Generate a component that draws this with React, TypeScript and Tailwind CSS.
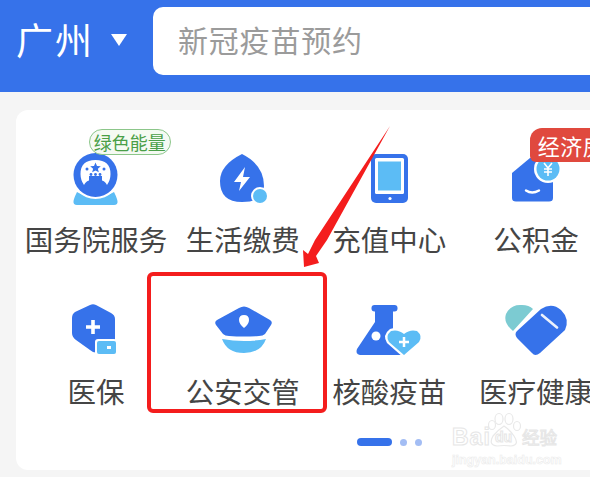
const BLUE = "#3672ea";
const LIGHT = "#5cbcf5";

function Icon({ x, y, children }: { x: number; y: number; children: React.ReactNode }) {
  return (
    <svg width="60" height="60" viewBox={`${x} ${y} 60 60`} className="block overflow-visible">
      {children}
    </svg>
  );
}

function Gov() {
  return (
    <Icon x={66} y={150}>
      <path d="M77 192 Q95.7 203 114 192 Q117 198 117.500 201 Q118 205 114 205 L77 205 Q73 205 73.500 201 Q74 198 77 192Z" fill={LIGHT} />
      <circle cx="95.5" cy="175" r="24" fill="#fff" />
      <circle cx="95.5" cy="175" r="22" fill={BLUE} />
      <path d="M84 185 Q80.500 180 80.500 174 Q80.500 160 95.500 160 Q110.500 160 110.500 174 Q110.500 180 107 185 Q105 181 102 180.500 L102 176 L89 176 L89 180.500 Q86 181 84 185Z" fill="#fff" />
      <path d="M95.500 162.500 L97 166 L100.800 166.300 L97.900 168.700 L98.800 172.300 L95.500 170.400 L92.200 172.300 L93.100 168.700 L90.200 166.300 L94 166Z" fill={BLUE} />
      <circle cx="87" cy="169" r="1.500" fill={BLUE} />
      <circle cx="104" cy="169" r="1.500" fill={BLUE} />
      <circle cx="91" cy="174.500" r="1.400" fill={BLUE} />
      <circle cx="95.500" cy="174.500" r="1.400" fill={BLUE} />
      <circle cx="100" cy="174.500" r="1.400" fill={BLUE} />
    </Icon>
  );
}

function Drop() {
  return (
    <Icon x={212} y={150}>
      <path d="M241 154 Q263 165 263 186 Q263 202 241 202 Q219 202 219 181 Q219 165 241 154Z" fill={BLUE} />
      <path d="M244 167 L233 182 L240 182 L238 191 L249 177 L242 177Z" fill="#fff" />
      <circle cx="259" cy="196" r="9" fill="#fff" />
      <circle cx="259" cy="196" r="7" fill={LIGHT} />
    </Icon>
  );
}

function Tablet() {
  return (
    <Icon x={359} y={150}>
      <rect x="371" y="154" width="37" height="49" rx="5" fill={BLUE} />
      <rect x="375" y="158" width="29" height="36" rx="1.500" fill="#fff" />
      <rect x="378" y="161.500" width="23" height="29" fill={LIGHT} />
      <circle cx="390" cy="198.500" r="1.600" fill="#fff" />
    </Icon>
  );
}

function Fund() {
  return (
    <Icon x={506} y={150}>
      <path d="M512 173 L530 158 L550 158 Q553 158 553 162 L553 198 Q553 201.500 549 201.500 L516 201.500 Q512 201.500 512 198Z" fill={BLUE} />
      <circle cx="548" cy="169" r="14" fill="#fff" />
      <circle cx="548" cy="169" r="11.500" fill={LIGHT} />
      <path d="M544 163 L548 168 L552 163 M548 168 L548 176 M544 169 L552 169 M544 172 L552 172" stroke="#fff" strokeWidth="1.600" fill="none" />
      <path d="M526 190.500 Q532 194.500 539 190.500" stroke="#fff" strokeWidth="2.400" fill="none" strokeLinecap="round" />
    </Icon>
  );
}

function Medical() {
  return (
    <Icon x={66} y={302}>
      <path d="M90 305 Q93 303.500 96 305 L111 313 Q115 315 115 319 L115 340 L101 352 Q94 354 90 350 L76 340 Q72 337 72 333 L72 318 Q72 314 75 312Z" fill={BLUE} />
      <path d="M93 320 L93 334 M86 327 L100 327" stroke="#fff" strokeWidth="3.600" fill="none" />
      <rect x="95" y="339" width="22" height="16.500" rx="3" fill="#fff" />
      <rect x="97" y="341" width="19" height="13" rx="2" fill={LIGHT} />
      <rect x="107" y="346" width="4" height="3" fill="#fff" />
    </Icon>
  );
}

function Police() {
  return (
    <Icon x={212} y={302}>
      <path d="M238 308 Q243 305 248 308 L269 320 Q272 322 270 325 L264 334 Q262 336 258 336 Q243 337 228 336 Q224 336 222 334 L215 325 Q213 322 216 320Z" fill={BLUE} />
      <path d="M243 315 Q248 315 248 320 Q248 324 243 328 Q238 324 238 320 Q238 315 243 315Z" fill="#fff" />
      <path d="M221 339 Q243 343 265 339 Q260 353 243 353 Q226 353 221 339Z" fill={LIGHT} />
    </Icon>
  );
}

function Flask() {
  return (
    <Icon x={359} y={302}>
      <rect x="371.500" y="305" width="26" height="6.500" rx="3" fill={BLUE} />
      <path d="M375 310 L393 310 L393 331 L404 355 L360 355 Q355 354 357 349 L375 322Z" fill={BLUE} />
      <circle cx="376" cy="336" r="4.500" fill="#fff" />
      <path d="M404 358 L387 343 Q382 335 390 329 Q398 326 404 331 Q410 326 418 329 Q425 335 420 343Z" fill="#fff" />
      <path d="M404 355 L389 342 Q385 336 391 331 Q398 329 404 334 Q410 329 417 331 Q423 336 419 342Z" fill={LIGHT} />
      <path d="M404 337 L404 347 M399 342 L409 342" stroke="#fff" strokeWidth="2.500" />
    </Icon>
  );
}

function Heart() {
  return (
    <Icon x={506} y={302}>
      <path d="M513 331 Q503 323 506 314 Q511 304 522 305 Q529 305 533 309Z" fill="#7ccbd2" />
      <path d="M517 331 L541 309 Q552 302 561 310 Q570 319 565 330 L540 353 Q535 357 532 353 L517 338 Q514 334 517 331Z" fill={BLUE} />
      <path d="M542 315 L557 327.500" stroke="#fff" strokeWidth="2.600" strokeLinecap="round" opacity="0.9" />
    </Icon>
  );
}

const items: { label: string; icon: React.ReactNode }[] = [
  { label: "国务院服务", icon: <Gov /> },
  { label: "生活缴费", icon: <Drop /> },
  { label: "充值中心", icon: <Tablet /> },
  { label: "公积金", icon: <Fund /> },
  { label: "医保", icon: <Medical /> },
  { label: "公安交管", icon: <Police /> },
  { label: "核酸疫苗", icon: <Flask /> },
  { label: "医疗健康", icon: <Heart /> },
];

export default function App() {
  return (
    <div className="relative w-[590px] h-[477px] overflow-hidden bg-[#f5f5f5] font-['Noto_Sans_CJK_SC','Noto_Sans',sans-serif]">
      <header className="flex items-start h-[92px] bg-[#3672ea] pt-[7px]">
        <div className="flex items-center h-[68px] w-[153px] pl-[16px] shrink-0 pb-[4px]">
          <span className="text-[37px] leading-none tracking-[2px] text-white whitespace-nowrap">广州</span>
          <span className="ml-[17px] mt-[2px] w-0 h-0 border-x-[8px] border-x-transparent border-t-[12px] border-t-white" />
        </div>
        <div className="flex items-center h-[68px] flex-1 rounded-l-[10px] bg-white pl-[25px] pb-[4px]">
          <span className="text-[30px] leading-none tracking-[0.8px] text-[#9b9b9b] whitespace-nowrap">新冠疫苗预约</span>
        </div>
      </header>

      <main className="ml-4 mt-[18px] h-[360px] w-[590px] rounded-l-xl bg-white pl-[6.67px] pt-10 overflow-hidden">
        <div className="grid grid-cols-[repeat(4,146.67px)] gap-y-[42px]">
          {items.map((it) => (
            <div key={it.label} className="relative flex flex-col items-center">
              {it.icon}
              <span className="mt-[9px] mb-[1px] text-[28.500px] leading-[40px] text-[#454545] whitespace-nowrap">{it.label}</span>
              {it.label === "国务院服务" && (
                <span className="absolute left-[66px] top-[-21px] flex items-center justify-center w-[82px] h-[26px] rounded-full border border-[#8cc68a] bg-[#f5faf3] text-[18px] leading-none text-[#4a9f48] whitespace-nowrap">
                  绿色能量
                </span>
              )}
              {it.label === "公积金" && (
                <span className="absolute left-[67px] top-[-22px] flex items-center w-[80px] h-[34px] rounded-tl-xl rounded-bl-md bg-[#e0493e] pl-[8px] text-[22px] leading-none tracking-[0.5px] text-white whitespace-nowrap">
                  经济房
                </span>
              )}
            </div>
          ))}
        </div>
        <div className="flex items-center gap-[8px] mt-[26px] ml-[334.330px]">
          <span className="w-[35px] h-[8px] rounded-full bg-[#3672ea]" />
          <span className="w-[7px] h-[7px] rounded-full bg-[#a3bdf4]" />
          <span className="w-[7px] h-[7px] rounded-full bg-[#a3bdf4]" />
        </div>
      </main>

      {/* annotation overlay */}
      <div className="absolute left-[147px] top-[272px] w-[180px] h-[141px] rounded-md border-[4px] border-[#f41d1d]" />
      <svg className="absolute left-0 top-0" width="590" height="477" viewBox="0 0 590 477">
        <path d="M390 126 L327 240 L316 256 L319 263 L304 267 L303 250 L308 254 L315 240Z" fill="#f41d1d" />
      </svg>

      {/* watermark */}
      <svg className="absolute left-0 top-0" width="590" height="477" viewBox="0 0 590 477" fill="none" stroke="#e9e9e9" strokeWidth="1.200">
        <ellipse cx="492" cy="425" rx="3.500" ry="4.500" />
        <ellipse cx="499" cy="419" rx="4" ry="5.500" />
        <ellipse cx="509" cy="419" rx="4" ry="5.500" />
        <ellipse cx="517" cy="426" rx="3.500" ry="4.500" />
        <path d="M504 426 Q510 430 514 436 Q520 445 511 446 Q504 445 497 446 Q488 445 493 436 Q498 430 504 426Z" />
      </svg>
      <div className="absolute left-[452px] top-[422px] flex flex-col items-start">
        <div className="flex items-center">
          <span className="w-[43px] text-[23px] leading-[30px] font-bold tracking-[1px] font-['Liberation_Sans',sans-serif] text-white [-webkit-text-stroke:1px_#e6e6e6]">Bai</span>
          <span className="w-[27px] text-[14px] leading-[30px] font-bold font-['Liberation_Sans',sans-serif] text-white [-webkit-text-stroke:1px_#e6e6e6]">du</span>
          <span className="text-[17.500px] leading-[30px] text-white [-webkit-text-stroke:1px_#e6e6e6]">经验</span>
        </div>
        <span className="text-[12.500px] leading-[16px] font-bold font-['Liberation_Sans',sans-serif] text-white [-webkit-text-stroke:0.6px_#ebebeb]">jingyan.baidu.com</span>
      </div>
    </div>
  );
}
